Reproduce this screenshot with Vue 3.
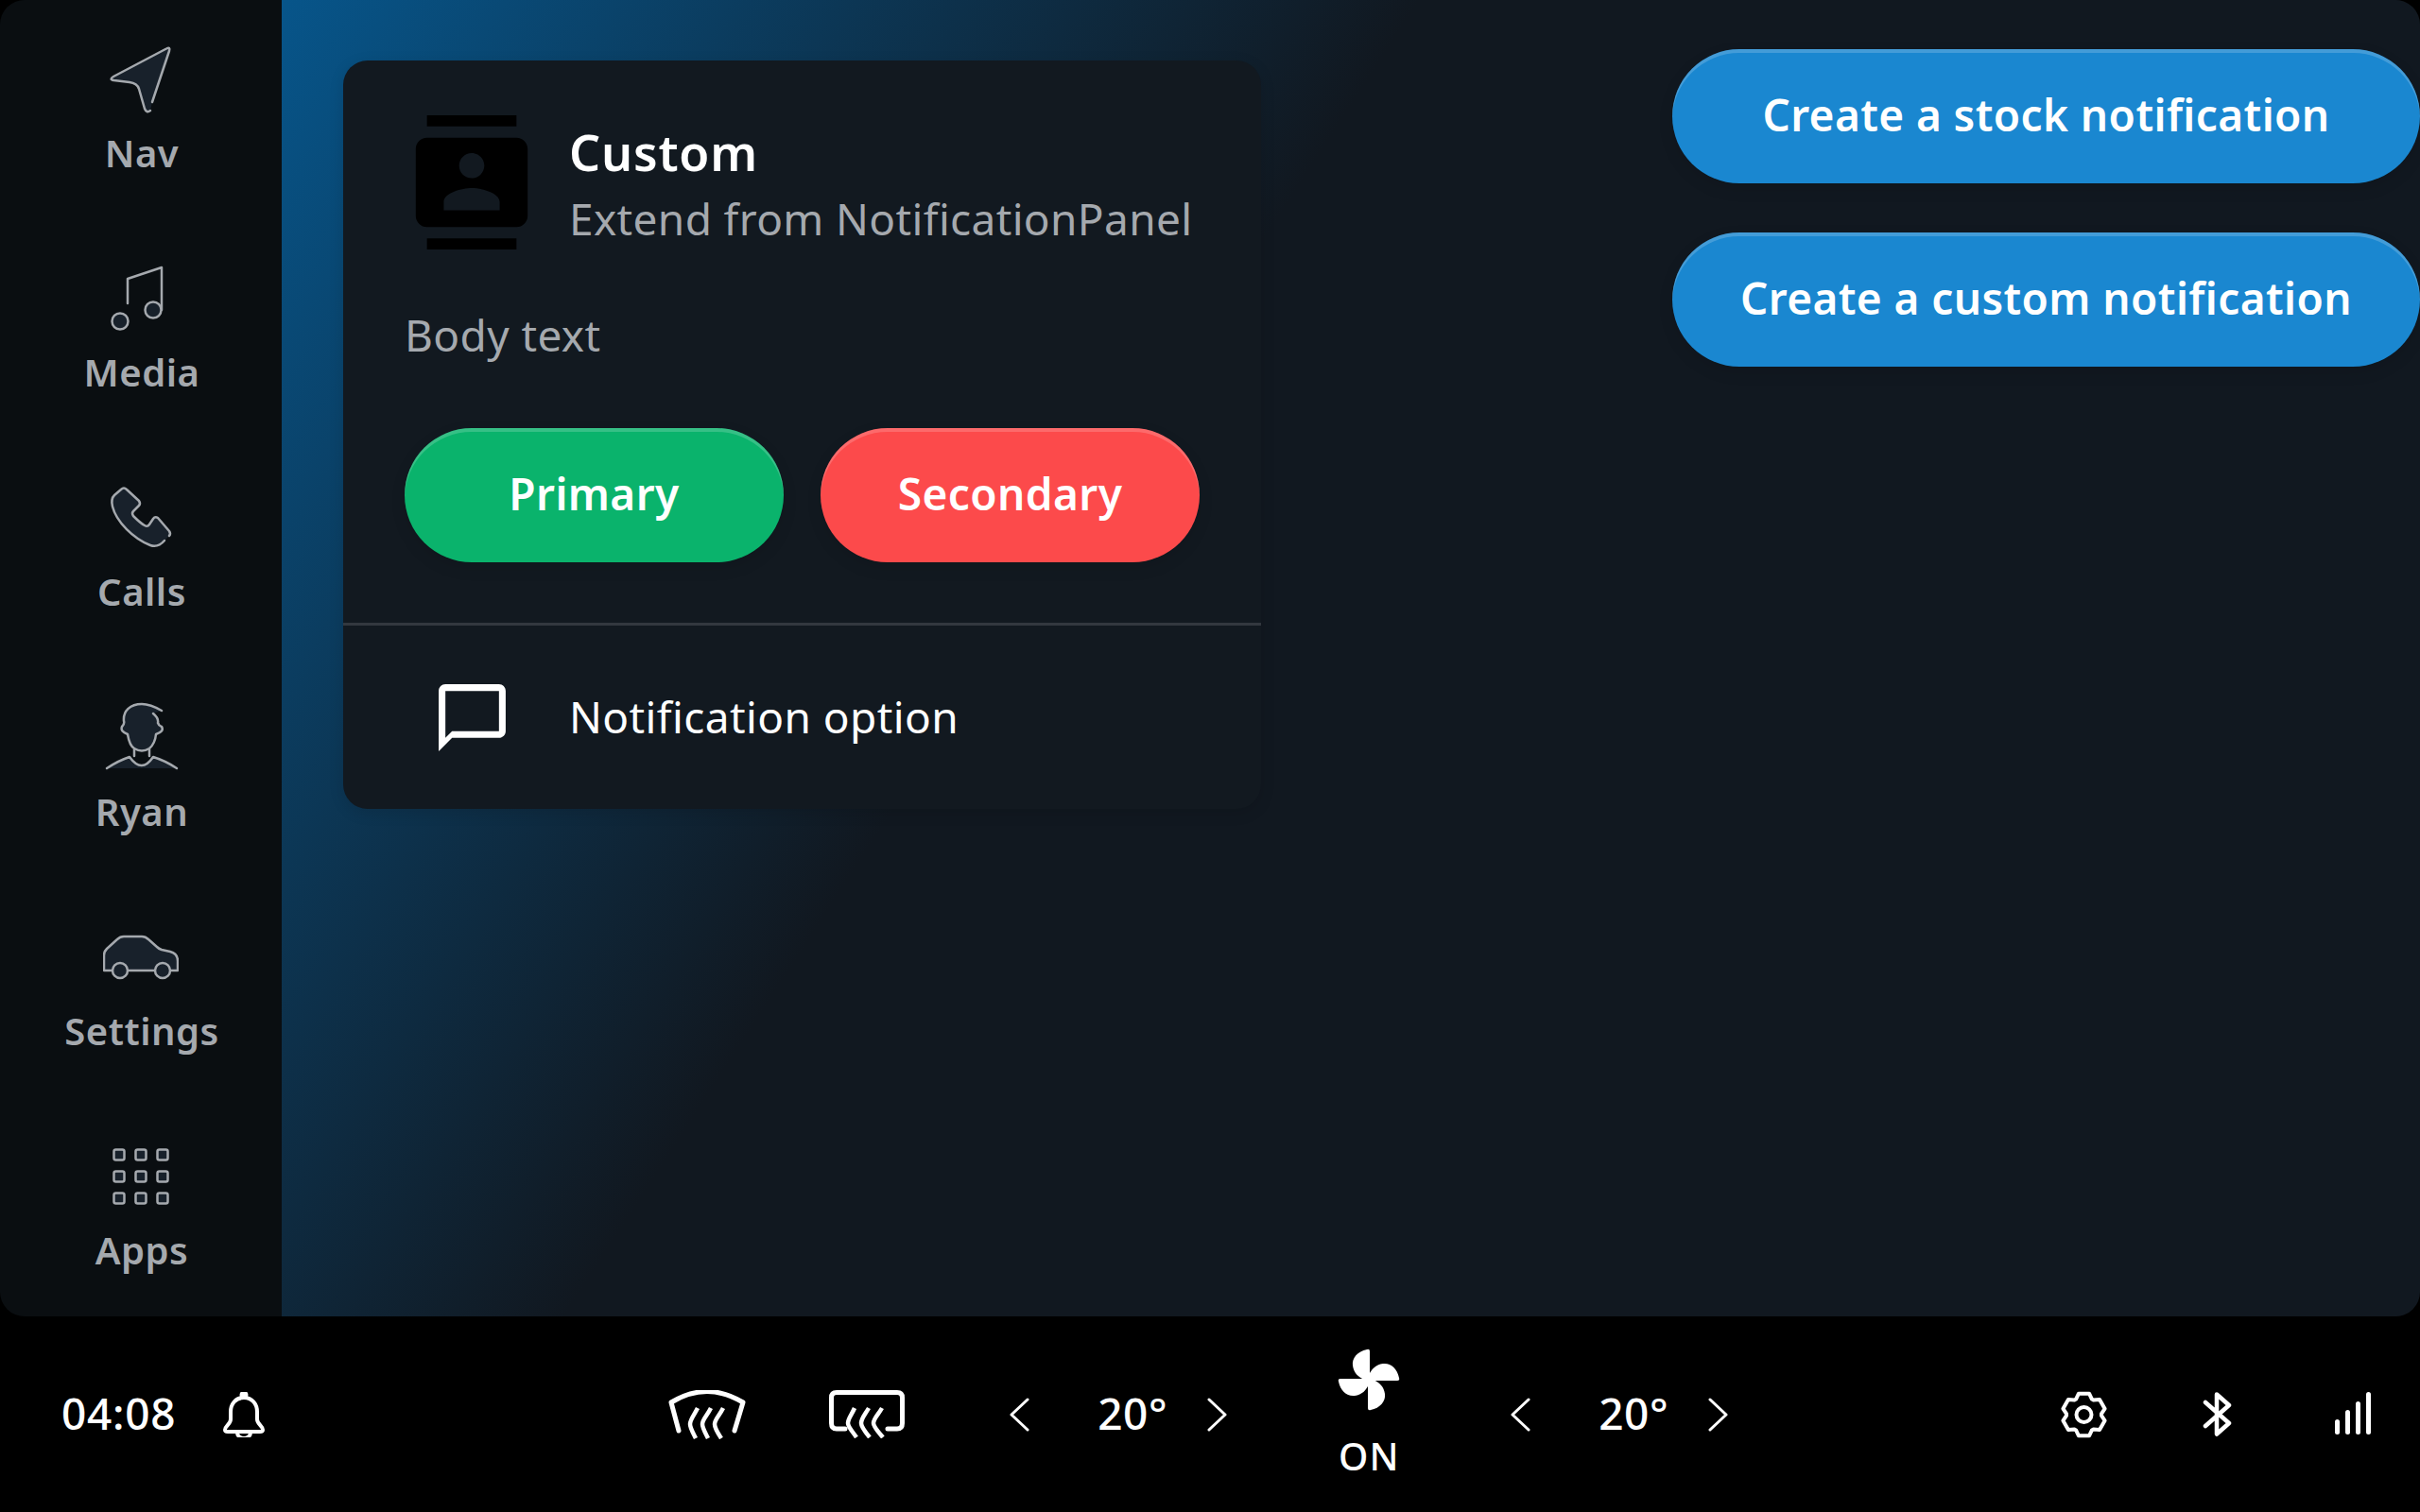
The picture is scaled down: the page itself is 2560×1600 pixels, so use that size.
<script setup>
// six tooth gear outline for the status bar
const gearPath = (() => {
  const cx = 24.5
  const cy = 25
  const pts = []
  for (let k = 0; k < 6; k++) {
    const a = -90 + 60 * k
    ;[[18.5, -27], [23, -14], [23, 14], [18.5, 27]].forEach(([r, d]) => {
      const t = ((a + d) * Math.PI) / 180
      pts.push(`${(cx + r * Math.cos(t)).toFixed(2)} ${(cy + r * Math.sin(t)).toFixed(2)}`)
    })
  }
  return 'M' + pts.join('L') + 'Z'
})()

const appDots = []
for (const y of [17, 40, 63]) {
  for (const x of [17, 40, 63]) appDots.push({ x: x - 5.5, y: y - 5.5 })
}
</script>

<template>
  <div class="screen">
    <div class="top">
      <nav class="sidebar">
        <div class="nav-item">
          <svg class="nav-icon" viewBox="0 0 80 80">
            <path d="M52 64 L70 10 Q71.500 5 67 7.500 L11 37 Q6 40 11.500 41 L28 43 Q36 44 38 50 L44 71 Q46 76 50 73" />
          </svg>
          <span>Nav</span>
        </div>
        <div class="nav-item">
          <svg class="nav-icon" viewBox="0 0 80 80">
            <path class="line" d="M26 45 V19 L62 7 V52" />
            <circle cx="53" cy="52" r="8.500" />
            <circle cx="18" cy="64" r="8.500" />
          </svg>
          <span>Media</span>
        </div>
        <div class="nav-item">
          <svg class="nav-icon" viewBox="0 0 80 80">
            <path d="M65 64 Q58 72 50 69 C32 62 14 44 10 28 Q8 20 12 16 L19 10 Q22 7 25 10 L38 22 Q40 25 38 27 L32 33 Q30 35 32 38 C36 42 40 46 44 48 Q47 50 49 47 L53 41 Q55 38 58 40 L70 54 Q72 57 70 59" />
          </svg>
          <span>Calls</span>
        </div>
        <div class="nav-item">
          <svg class="nav-icon" viewBox="0 0 80 80">
            <path class="body" d="M4 72 Q16 64 28 60 Q41 78 53 60 Q66 64 78 72 Z" />
            <path d="M62 11 Q50 4 41 4 C29 4 21 11 22 22 Q23 25 20 28 Q18 33 26 36 Q28 48 33 51 Q41 56 49 51 Q55 46 56 36 Q65 33 62 28 Q59 27 58 24 Q59 19 53 14" />
            <path class="line" d="M33 52 V59 M49 52 V59 M4 72 Q16 64 28 60 Q41 78 53 60 Q66 64 78 72" />
          </svg>
          <span>Ryan</span>
        </div>
        <div class="nav-item">
          <svg class="nav-icon" viewBox="0 0 80 80">
            <path class="body" d="M1 54 V38 Q1 34 4 31 L15 21 Q18 18 22 18 H41 Q45 18 48 21 L57 29 Q59 31 62 32 L71 34 Q79 36 79 44 V54 Z" />
            <path class="line" d="M10 54 H1 V38 Q1 34 4 31 L15 21 Q18 18 22 18 H41 Q45 18 48 21 L57 29 Q59 31 62 32 L71 34 Q79 36 79 44 V54 H71 M26 54 H55" />
            <circle cx="18" cy="54" r="8" />
            <circle cx="63" cy="54" r="8" />
          </svg>
          <span>Settings</span>
        </div>
        <div class="nav-item">
          <svg class="nav-icon" viewBox="0 0 80 80">
            <rect v-for="d in appDots" :key="`${d.x}-${d.y}`" :x="d.x" :y="d.y" width="11" height="11" rx="2" />
          </svg>
          <span>Apps</span>
        </div>
      </nav>

      <main class="content">
        <section class="card">
          <header class="card-head">
            <svg class="card-icon" viewBox="0 0 24 24">
              <path d="M20 0H4v2h16V0zM4 24h16v-2H4v2zM20 4H4c-1.100 0-2 .9-2 2v12c0 1.100.9 2 2 2h16c1.100 0 2-.9 2-2V6c0-1.100-.9-2-2-2zm-8 2.750c1.240 0 2.250 1.010 2.250 2.250s-1.010 2.250-2.250 2.250S9.750 10.240 9.750 9 10.760 6.750 12 6.750zM17 17H7v-1.500c0-1.670 3.330-2.500 5-2.500s5 .83 5 2.500V17z" />
            </svg>
            <div class="card-titles">
              <h2>Custom</h2>
              <p>Extend from NotificationPanel</p>
            </div>
          </header>
          <p class="card-body">Body text</p>
          <div class="card-buttons">
            <button class="pill green">Primary</button>
            <button class="pill red">Secondary</button>
          </div>
          <div class="card-option">
            <svg class="option-icon" viewBox="0 0 24 24">
              <path d="M20 2H4c-1.100 0-2 .9-2 2v18l4-4h14c1.100 0 2-.9 2-2V4c0-1.100-.9-2-2-2zm0 14H6l-2 2V4h16v12z" />
            </svg>
            <span>Notification option</span>
          </div>
        </section>

        <div class="actions">
          <button class="pill blue">Create a stock notification</button>
          <button class="pill blue">Create a custom notification</button>
        </div>
      </main>
    </div>

    <footer class="bar">
      <div class="bar-left">
        <span class="time">04:08</span>
        <svg class="bell" width="46" height="48" viewBox="0 0 46 48">
          <circle cx="23" cy="3" r="2.500" fill="#fff" />
          <path d="M23 6 C14 6 9 13 9 21 V29 C9 34 3 36 3 40 Q3 42 6 42 H40 Q43 42 43 40 C43 36 37 34 37 29 V21 C37 13 32 6 23 6 Z" />
          <path d="M16 43 A7 6 0 0 0 30 43" />
        </svg>
      </div>

      <div class="bar-climate">
        <svg class="defrost-front" width="84" height="52" viewBox="0 0 84 52">
          <path d="M12 43 L4 13 Q42 -10 80 13 L71 43" />
          <path class="wave" d="M32 19 C28 27 24 31 24 36 C24 40 27 45 30 51" />
          <path class="wave" d="M46 19 C42 27 37 31 37 36 C37 40 40 45 43 51" />
          <path class="wave" d="M59 19 C55 27 50 31 50 36 C50 40 53 45 57 51" />
        </svg>
        <svg class="defrost-rear" width="80" height="51" viewBox="0 0 80 51">
          <path d="M17 41 H8 Q2.500 41 2.500 35 V8 Q2.500 2.500 8 2.500 H72 Q77.500 2.500 77.500 8 V35 Q77.500 41 72 41 H62" />
          <path class="wave" d="M27 19 C24 26 20 30 20 35 C20 39 25 44 29 50" />
          <path class="wave" d="M42 19 C38 26 34 30 34 35 C34 39 38 44 43 50" />
          <path class="wave" d="M56 19 C52 26 47 30 47 35 C47 39 52 44 57 50" />
        </svg>

        <div class="temp">
          <svg class="chev" width="22" height="36" viewBox="0 0 22 36"><path d="M20 2 L3 18 L20 34" /></svg>
          <span>20°</span>
          <svg class="chev" width="22" height="36" viewBox="0 0 22 36"><path d="M2 2 L19 18 L2 34" /></svg>
        </div>

        <div class="fan">
          <svg width="66" height="66" viewBox="0 0 66 66">
            <path d="M34 33 V3 Q34 0 31 1 C21 3 15 10 16 18 C17 26 22 30 28 33 Z" />
            <path d="M34 33 V3 Q34 0 31 1 C21 3 15 10 16 18 C17 26 22 30 28 33 Z" transform="rotate(90 33 33)" />
            <path d="M34 33 V3 Q34 0 31 1 C21 3 15 10 16 18 C17 26 22 30 28 33 Z" transform="rotate(180 33 33)" />
            <path d="M34 33 V3 Q34 0 31 1 C21 3 15 10 16 18 C17 26 22 30 28 33 Z" transform="rotate(270 33 33)" />
          </svg>
          <span>ON</span>
        </div>

        <div class="temp">
          <svg class="chev" width="22" height="36" viewBox="0 0 22 36"><path d="M20 2 L3 18 L20 34" /></svg>
          <span>20°</span>
          <svg class="chev" width="22" height="36" viewBox="0 0 22 36"><path d="M2 2 L19 18 L2 34" /></svg>
        </div>
      </div>

      <div class="bar-status">
        <svg class="gear" width="49" height="50" viewBox="0 0 49 50">
          <path :d="gearPath" />
          <circle cx="24.500" cy="25" r="8" />
        </svg>
        <svg class="bt" width="31" height="47" viewBox="0 0 31 47">
          <path d="M3 11 L28 33 L15 44.500 V2.500 L28 14 L3 36" />
        </svg>
        <svg class="signal" width="38" height="48" viewBox="0 0 38 48">
          <rect x="0" y="29" width="5" height="16" rx="2.500" />
          <rect x="11" y="19" width="5" height="26" rx="2.500" />
          <rect x="22" y="10" width="5" height="35" rx="2.500" />
          <rect x="33" y="0" width="5" height="45" rx="2.500" />
        </svg>
      </div>
    </footer>
  </div>
</template>

<style>
html,
body {
  margin: 0;
  background: #000;
}
</style>

<style scoped>
.screen {
  width: 2560px;
  height: 1600px;
  display: flex;
  flex-direction: column;
  background: #000;
  font-family: "Noto Sans", sans-serif;
  overflow: hidden;
}

.top {
  height: 1393px;
  display: flex;
  border-radius: 26px;
  overflow: hidden;
}

.sidebar {
  width: 298px;
  flex: none;
  display: flex;
  flex-direction: column;
  background: #0a0e11;
}

.nav-item {
  flex: 1;
  display: flex;
  flex-direction: column;
  align-items: center;
  justify-content: center;
  box-sizing: border-box;
  padding: 1px 0 0 2px;
  color: #a5a9ae;
  font-size: 40px;
  font-weight: 600;
  line-height: 54px;
  letter-spacing: 0.5px;
}

.nav-icon {
  width: 80px;
  height: 80px;
  margin: 0 0 11px -2px;
  fill: #18212b;
  stroke: #a5a9ae;
  stroke-width: 2.500;
  stroke-linejoin: round;
  stroke-linecap: round;
}

.nav-icon .line {
  fill: none;
}

.nav-icon .body {
  stroke: none;
}

.content {
  flex: 1;
  display: flex;
  justify-content: space-between;
  align-items: flex-start;
  padding-left: 65px;
  background: linear-gradient(123deg, #07558a 0%, #111820 38%);
}

.card {
  width: 971px;
  height: 792px;
  margin-top: 64px;
  border-radius: 26px;
  background: #121920;
  box-shadow: 0 4px 16px rgba(0, 0, 0, 0.12);
}

.card-head {
  display: flex;
  align-items: center;
  gap: 32px;
  padding: 58px 65px 0;
}

.card-icon {
  width: 142px;
  height: 142px;
  flex: none;
  fill: #000;
}

.card-titles h2 {
  margin: 2px 0 0;
  color: #fff;
  font-size: 52px;
  font-weight: 600;
  line-height: 72px;
  letter-spacing: 0.8px;
}

.card-titles p {
  margin: 2px 0 0;
  color: #a5a9ae;
  font-size: 46px;
  line-height: 64px;
  letter-spacing: 0.35px;
  white-space: nowrap;
}

.card-body {
  margin: 58px 0 0 65px;
  color: #a5a9ae;
  font-size: 46px;
  line-height: 64px;
  letter-spacing: 0.4px;
}

.card-buttons {
  display: flex;
  gap: 39px;
  margin: 67px 0 0 65px;
}

.pill {
  height: 142px;
  border: none;
  border-radius: 71px;
  color: #fff;
  font-family: inherit;
  font-size: 46px;
  font-weight: 600;
  letter-spacing: 0.4px;
  padding: 0 0 4px;
  box-shadow: inset 0 4px 0 rgba(255, 255, 255, 0.18), 0 6px 16px rgba(0, 0, 0, 0.1);
}

.green,
.red {
  width: 401px;
}

.green {
  background: #0ab36c;
}

.red {
  background: #fc4a4b;
}

.blue {
  width: 791px;
  background: #1a87d0;
}

.card-option {
  display: flex;
  align-items: center;
  gap: 60px;
  height: 195px;
  margin-top: 64px;
  padding-left: 94px;
  border-top: 3px solid #33383f;
  color: #fff;
  font-size: 46px;
  letter-spacing: 0.4px;
}

.card-option span {
  padding-bottom: 4px;
}

.option-icon {
  width: 85px;
  height: 85px;
  fill: #fff;
}

.actions {
  display: flex;
  flex-direction: column;
  gap: 52px;
  padding-top: 52px;
}

.bar {
  flex: 1;
  display: flex;
  align-items: center;
  padding: 0 52px 0 65px;
  color: #fff;
}

.bar svg {
  flex: none;
}

.bar-left {
  display: flex;
  align-items: center;
  gap: 49px;
}

.time {
  font-size: 46px;
  font-weight: 500;
  line-height: 64px;
  letter-spacing: 0.7px;
  padding-bottom: 3px;
}

.bell,
.defrost-front,
.defrost-rear,
.chev,
.gear,
.bt {
  fill: none;
  stroke: #fff;
  stroke-linecap: round;
  stroke-linejoin: round;
}

.bell,
.gear {
  stroke-width: 4;
}

.defrost-front,
.defrost-rear {
  stroke-width: 5;
}

.wave {
  stroke-width: 4.500;
  stroke-linecap: butt;
}

.chev {
  stroke-width: 3;
}

.bt {
  stroke-width: 4.500;
}

.signal {
  fill: #fff;
}

.bar-climate {
  display: flex;
  align-items: center;
  margin-left: 425px;
}

.defrost-rear {
  margin-left: 87px;
}

.temp {
  display: flex;
  align-items: center;
  font-size: 46px;
  font-weight: 500;
  line-height: 64px;
  letter-spacing: 0.5px;
  margin-left: 110px;
}

.temp span {
  width: 72px;
  margin: 0 44px 0 72px;
  padding-bottom: 3px;
}

.fan {
  display: flex;
  flex-direction: column;
  align-items: center;
  width: 66px;
  margin: 1px 0 0 116px;
  font-size: 40px;
  font-weight: 500;
  line-height: 54px;
  letter-spacing: 1px;
}

.fan svg {
  fill: #fff;
  margin-bottom: 21px;
}

.fan + .temp {
  margin-left: 116px;
}

.bar-status {
  display: flex;
  align-items: center;
  margin-left: auto;
}

.bt {
  margin-left: 101px;
}

.signal {
  margin-left: 109px;
}
</style>
